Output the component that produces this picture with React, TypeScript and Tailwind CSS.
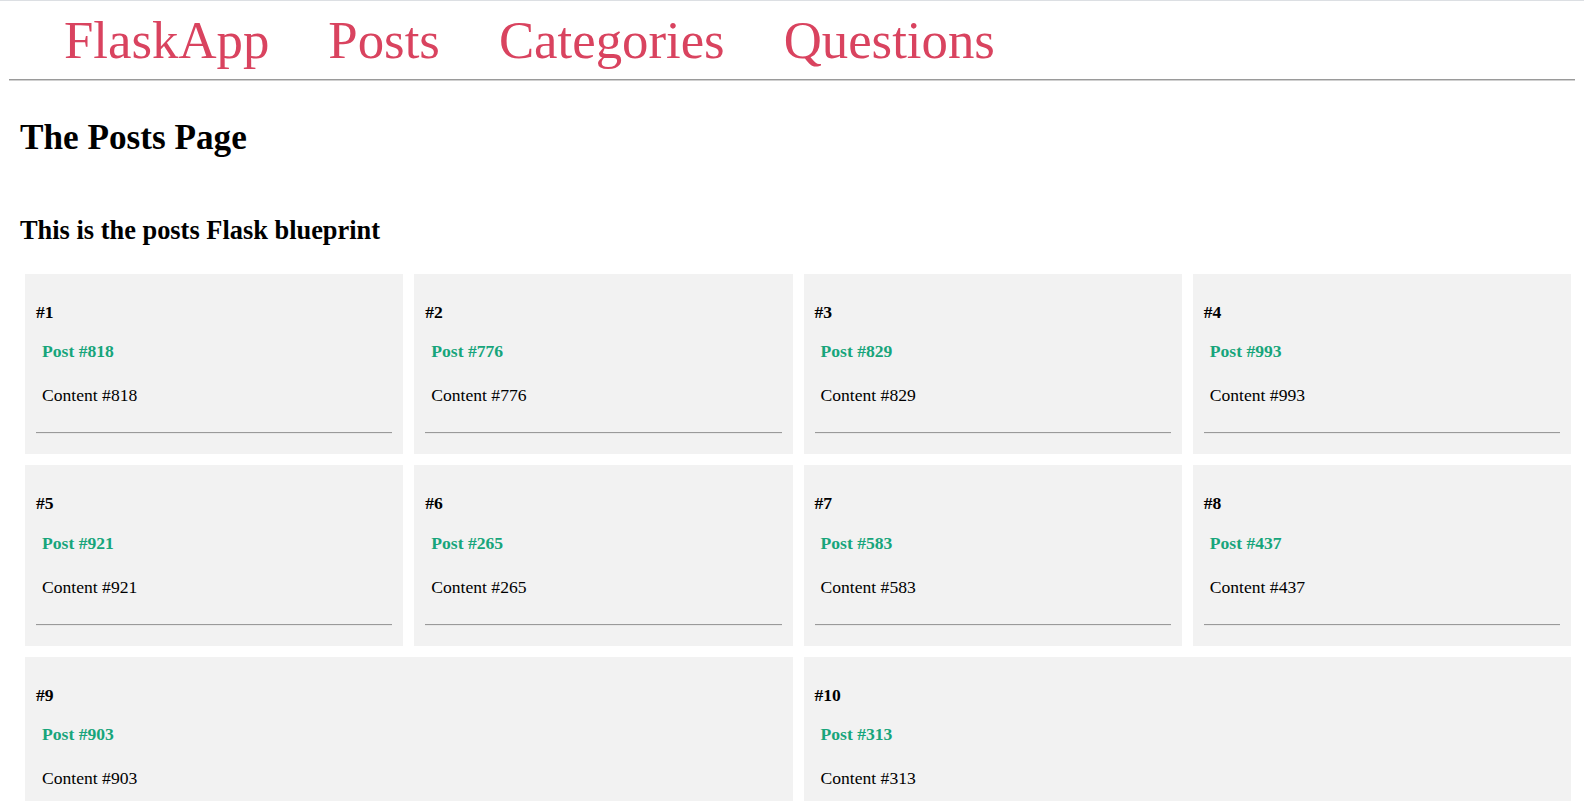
// Posts page of the Flask blueprint demo

const posts = [
  { n: 1, id: 818 },
  { n: 2, id: 776 },
  { n: 3, id: 829 },
  { n: 4, id: 993 },
  { n: 5, id: 921 },
  { n: 6, id: 265 },
  { n: 7, id: 583 },
  { n: 8, id: 437 },
  { n: 9, id: 903 },
  { n: 10, id: 313 },
];

const PostCard = ({ n, id, wide }: { n: number; id: number; wide: boolean }) => {
  return (
    <div className={wide ? "col-span-2 bg-[#f2f2f2] px-[11px] pt-[28px] pb-[20px]" : "bg-[#f2f2f2] px-[11px] pt-[28px] pb-[20px]"}>
      <h4 className="text-[17.6px] leading-[20px] font-bold">#{n}</h4>
      <div className="pl-[6px]">
        <a className="mt-[19.5px] block text-[17.6px] leading-[20px] font-bold text-[#17a57b]">Post #{id}</a>
        <p className="mt-[24px] text-[17.6px] leading-[20px]">Content #{id}</p>
      </div>
      <hr className="mt-[27px] border-t border-b border-t-[#9a9a9a] border-b-[#e8e8e8]" />
    </div>
  );
};

export default function App() {
  return (
    <div className="min-h-screen border-t border-[#dcdfe3] bg-white font-['Liberation_Serif',serif] text-black">
      <nav className="flex gap-[59px] pt-[8.5px] pl-[64px] text-[52.8px] leading-[60px] text-[#d9435f]">
        <a>FlaskApp</a>
        <a>Posts</a>
        <a>Categories</a>
        <a>Questions</a>
      </nav>
      <hr className="mx-[9px] mt-[9px] border-t border-b border-t-[#9a9a9a] border-b-[#d0d0d0]" />
      <div className="pl-[20px]">
        <h1 className="mt-[37px] text-[35.2px] leading-[40px] font-bold">The Posts Page</h1>
        <h2 className="mt-[57px] text-[26.4px] leading-[30px] font-bold">This is the posts Flask blueprint</h2>
      </div>
      <div className="mt-[29px] ml-[25px] mr-[13px] grid grid-cols-4 gap-x-[11px] gap-y-[11px]">
        {posts.map((p) => (
          <PostCard key={p.n} n={p.n} id={p.id} wide={p.n > 8} />
        ))}
      </div>
    </div>
  );
}
